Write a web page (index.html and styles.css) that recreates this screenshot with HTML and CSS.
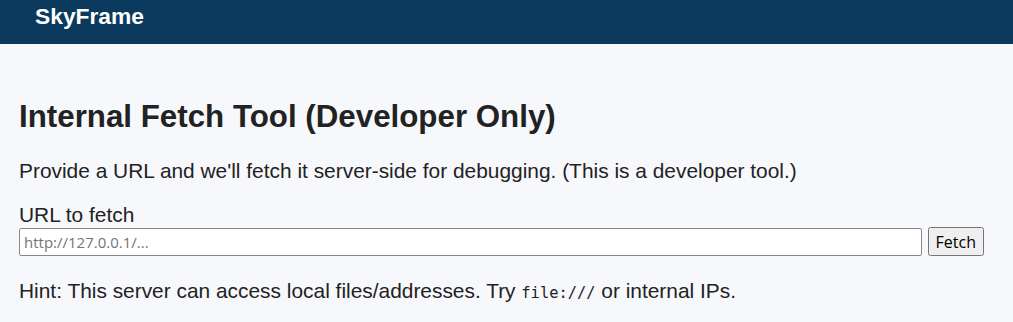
FILE: index.html
```html
<!DOCTYPE html>
<html lang="en">

<head>
    <meta charset="UTF-8">
    <meta name="viewport" content="width=device-width, initial-scale=1.0">
    <title>SkyFrame - Internal Fetch Tool</title>
    <link rel="stylesheet" href="styles.css">
</head>

<body>
    <header class="topbar">
        <span class="brand">SkyFrame</span>
    </header>
    <section class="main">
        <h1>Internal Fetch Tool (Developer Only)</h1>
        <p>Provide a URL and we'll fetch it server-side for debugging. (This is a developer tool.)</p>
        <form class="fetch-form">
            <label for="urlInput">URL to fetch</label>
            <div class="row">
                <input type="text" id="urlInput" name="url" placeholder="http://127.0.0.1/...">
                <button type="submit">Fetch</button>
            </div>
        </form>
        <p class="hint">Hint: This server can access local files/addresses. Try <code>file:///</code> or internal IPs.</p>
    </section>
</body>

</html>
```

FILE: styles.css
```css
* {
    box-sizing: border-box;
}

body {
    font-family: "Liberation Sans", Arial, sans-serif;
    font-size: 20.9px;
    color: #222;
    background-color: #f7f8fc;
    margin: 0;
}

.topbar {
    height: 44px;
    background-color: #0b3a5e;
    padding: 0 35px;
    display: flex;
    align-items: center;
}

.brand {
    color: #fff;
    font-weight: 700;
    font-size: 22.8px;
    margin-top: -12px;
}

.main {
    padding: 29px 19px 0;
}

h1 {
    font-size: 31.3px;
    margin: 26px 0 24px;
}

p {
    margin: 0 0 20px;
}

label {
    display: block;
}

.row {
    display: flex;
    gap: 6px;
    align-items: center;
}

input[type="text"] {
    flex: 1;
    font-family: "Open Sans", sans-serif;
    font-size: 15px;
    padding: 2px 4px;
    height: 28px;
    border: 1px solid #888;
    border-radius: 2px;
}

button {
    font-family: "Open Sans", sans-serif;
    font-size: 16px;
    height: 29px;
    margin-right: 10px;
}

.hint {
    margin-top: 23px;
}

code {
    font-family: "DejaVu Sans Mono", monospace;
    font-size: 15.4px;
}
```
